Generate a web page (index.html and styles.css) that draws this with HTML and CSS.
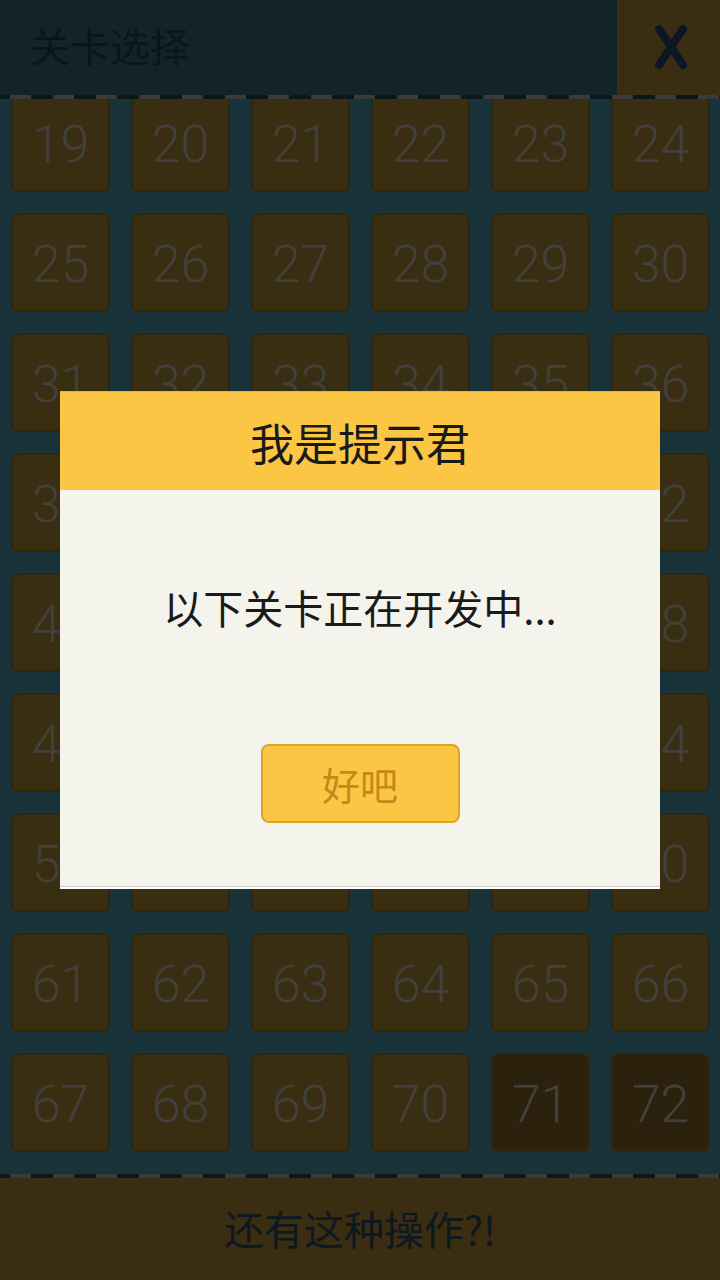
FILE: index.html
```html
<!DOCTYPE html>
<html lang="zh-CN">
<head>
  <meta charset="UTF-8">
  <meta name="viewport" content="width=device-width, initial-scale=1.0">
  <title>关卡选择</title>
  <link rel="stylesheet" href="styles.css">
</head>
<body>
  <div class="app">
    <header class="top-bar">
      <h1 class="top-title">关卡选择</h1>
      <button class="close-btn" aria-label="关闭">
        <svg width="40" height="48" viewBox="0 0 40 48">
          <path d="M8 6 L32 42 M32 6 L8 42" stroke="#2c4a80" stroke-width="8" stroke-linecap="round" fill="none"/>
        </svg>
      </button>
    </header>
    <div class="dash-line"></div>

    <main class="level-scroll">
      <div id="level-grid" class="level-grid"></div>
    </main>

    <div class="dash-line"></div>
    <footer class="bottom-bar">还有这种操作?!</footer>
  </div>

  <div class="mask">
    <div class="dialog">
      <div class="dialog-head">我是提示君</div>
      <div class="dialog-body">
        <p class="dialog-msg">以下关卡正在开发中...</p>
        <button class="dialog-btn">好吧</button>
      </div>
    </div>
  </div>

  <script>
    // Build level tiles 19 - 72
    const grid = document.getElementById("level-grid");
    for (let n = 19; n <= 72; n++) {
      const tile = document.createElement("div");
      tile.classList.add("tile");
      if (n > 70) tile.classList.add("locked");
      tile.textContent = n;
      grid.appendChild(tile);
    }
  </script>
</body>
</html>
```

FILE: styles.css
```css
body {
  margin: 0;
  font-family: "Noto Sans CJK SC", sans-serif;
  background-color: #53aac1;
}
.app {
  display: flex;
  flex-direction: column;
  height: 1280px;
  overflow: hidden;
}
.top-bar {
  display: flex;
  align-items: stretch;
  height: 95px;
  background-color: #3f758c;
}
.top-title {
  flex: 1;
  margin: 0;
  padding-left: 30px;
  font-size: 40px;
  font-weight: normal;
  line-height: 90px;
  color: #274a5a;
}
.close-btn {
  width: 103px;
  border: none;
  padding: 0;
  background-color: #c1963c;
  display: flex;
  justify-content: center;
  align-items: center;
}
.close-btn svg {
  margin-left: 4px;
  margin-bottom: 2px;
}
.dash-line {
  height: 4px;
  flex-shrink: 0;
  background: repeating-linear-gradient(90deg, #26505d 0 10px, #c4c4c4 10px 31px, #26505d 31px 43px);
}
.level-scroll {
  flex: 1;
  overflow: hidden;
  background-color: #53aac1;
  background-image: repeating-linear-gradient(0deg, rgba(0,0,0,0.04) 0 1px, transparent 1px 3px);
}
.level-grid {
  display: grid;
  grid-template-columns: repeat(6, 99px);
  grid-auto-rows: 99px;
  gap: 21px;
  padding-left: 11px;
  margin-top: -6px;
}
.tile {
  display: flex;
  justify-content: center;
  align-items: center;
  padding-top: 4px;
  background-color: #c1993c;
  border: 2px solid #a47c24;
  border-radius: 8px;
  box-sizing: border-box;
  font-family: Roboto, "Liberation Sans", sans-serif;
  font-weight: 300;
  font-size: 52px;
  color: #dcd8cc;
}
.tile.locked {
  background-color: #98742f;
  background-image:
    repeating-linear-gradient(0deg, rgba(0,0,0,0.08) 0 1px, transparent 1px 4px),
    repeating-linear-gradient(90deg, rgba(0,0,0,0.08) 0 1px, transparent 1px 4px);
}
.bottom-bar {
  height: 102px;
  flex-shrink: 0;
  background-color: #c1963c;
  display: flex;
  justify-content: center;
  align-items: center;
  font-size: 40px;
  color: #2f5569;
  padding-bottom: 2px;
  box-sizing: border-box;
}
.mask {
  position: fixed;
  inset: 0;
  background-color: rgba(0, 0, 0, 0.7);
  display: flex;
  justify-content: center;
  align-items: center;
}
.dialog {
  width: 600px;
  height: 498px;
  display: flex;
  flex-direction: column;
  background-color: #f4f3ec;
  box-shadow: inset 0 -2px 0 #fff, inset 0 -3px 0 #d4d2c8;
}
.dialog-head {
  height: 99px;
  border-top: 1px solid #e4b43e;
  background-color: #fcc645;
  display: flex;
  justify-content: center;
  align-items: center;
  font-size: 44px;
  color: #1a1a1a;
  padding-top: 1px;
  box-sizing: border-box;
}
.dialog-body {
  flex: 1;
  display: flex;
  flex-direction: column;
  align-items: center;
}
.dialog-msg {
  margin: 92px 0 0;
  font-size: 40px;
  line-height: 50px;
  color: #1a1a1a;
}
.dialog-btn {
  margin-top: 112px;
  width: 199px;
  height: 79px;
  background-color: #fcc645;
  border: 2px solid #e2a324;
  border-radius: 8px;
  font-family: "Noto Sans CJK SC", sans-serif;
  font-size: 38px;
  color: #c38a18;
  padding: 0;
}
```
